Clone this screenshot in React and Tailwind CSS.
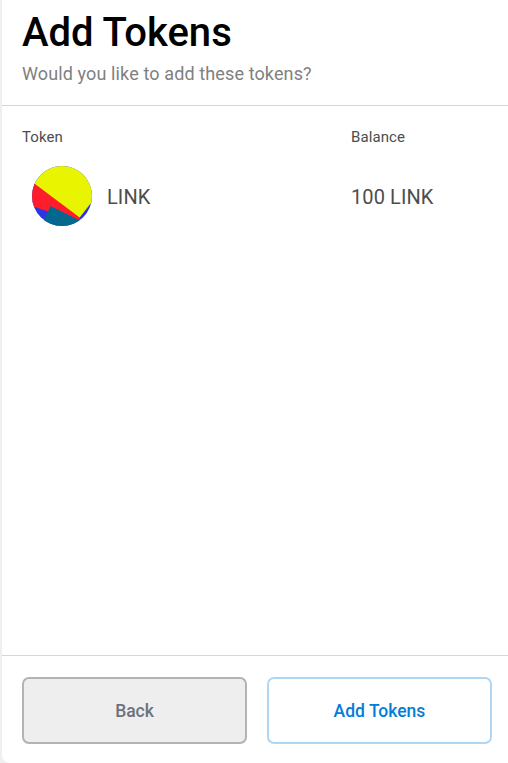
function TokenIcon() {
  return (
    <svg className="ml-[10px] size-[60px] shrink-0 rounded-full" viewBox="0 0 60 60" aria-hidden="true">
      <rect width="60" height="60" fill="#2a37e0" />
      <path d="M-4 38.5L16 45.5L47 55L48 51L0 12Z" fill="#ff1c2b" />
      <path d="M18.5 40L47.2 54.2L42 66H5L12.7 52.7Z" fill="#02688f" />
      <path d="M-12 -8H66V28L47.7 51.5L3 18Z" fill="#e9f500" />
    </svg>
  );
}

export default function App() {
  return (
    <div className="h-[763px] w-[508px] overflow-hidden bg-[#efefef] pl-[2px] font-['Roboto',sans-serif]">
      <main className="flex h-full flex-col overflow-hidden rounded-bl-[8px] bg-white">
        <header className="h-[106px] shrink-0 border-b border-[#d2d8dd] pl-5 pt-[9px]">
          <h1 className="text-[40px] font-medium leading-[47px] text-black">Add Tokens</h1>
          <p className="pt-[7px] text-[18px] leading-[21px] tracking-[0.12px] text-[#808080]">
            Would you like to add these tokens?
          </p>
        </header>

        <section className="flex-1 pl-5 pt-[21px] text-[#4d4d4d]">
          <div className="flex text-[15px] leading-[20px] tracking-[0.1px]">
            <div className="w-[329px]">Token</div>
            <div>Balance</div>
          </div>
          <div className="mt-[19px] flex items-center text-[20px] leading-[24px] tracking-[0.1px]">
            <div className="flex w-[329px] items-center">
              <TokenIcon />
              <span className="ml-[15px] pt-[2px]">LINK</span>
            </div>
            <div className="pt-[2px]">100 LINK</div>
          </div>
        </section>

        <footer className="flex h-[108px] shrink-0 gap-5 border-t border-[#d2d8dd] pl-5 pr-4 pt-[21px] text-[17.5px] font-medium">
          <button className="h-[67px] flex-1 rounded-[7px] border-2 border-[#b3b3b3] bg-[#eeeeee] pt-[2px] text-[#6a737d]">
            Back
          </button>
          <button className="h-[67px] flex-1 rounded-[7px] border-2 border-[#b0d7f2] bg-white pt-[2px] text-[#037dd6]">
            Add Tokens
          </button>
        </footer>
      </main>
    </div>
  );
}
